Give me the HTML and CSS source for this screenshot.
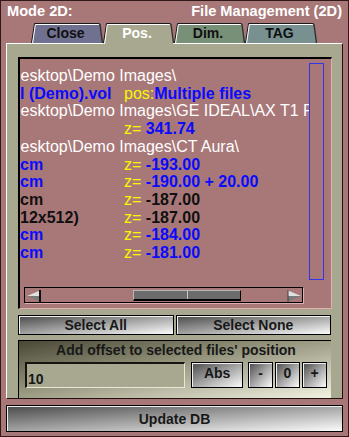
FILE: index.html
```html
<html>
    <head>
        <title>Mode 2D - File Management</title>
        <link rel="stylesheet" href="styles.css">
    </head>
    <body>
        <div class="win">
            <div class="head">
                <span>Mode 2D:</span>
                <span>File Management (2D)</span>
            </div>

            <div class="tabs">
                <div class="tab tab-close">
                    <svg width="72" height="20" viewBox="0 0 72 20">
                        <polygon points="0.5,20 3.5,1 4.5,0 68,0 69,1 71.5,20" fill="#707090"/>
                        <polyline points="0.5,20 3.5,0.5 68,0.5" fill="none" stroke="#181818"/>
                        <polyline points="1.6,20 4.4,1.5 68,1.5" fill="none" stroke="#ffffff"/>
                        <polyline points="68,0.5 69,1.5 71.5,20" fill="none" stroke="#303030" stroke-width="1.4"/>
                    </svg>
                    <span>Close</span>
                </div>
                <div class="tab tab-pos">
                    <svg width="71" height="21" viewBox="0 0 71 21">
                        <polygon points="0.5,21 3.5,1 4.5,0 67,0 68,1 70.5,21" fill="#a8a890"/>
                        <polyline points="0.5,20 3.5,0.5 67,0.5" fill="none" stroke="#181818"/>
                        <polyline points="1.6,21 4.4,1.5 67,1.5" fill="none" stroke="#ffffff"/>
                        <polyline points="67,0.5 68,1.5 70.5,20" fill="none" stroke="#303030" stroke-width="1.4"/>
                    </svg>
                    <span>Pos.</span>
                </div>
                <div class="tab tab-dim">
                    <svg width="71" height="20" viewBox="0 0 71 20">
                        <polygon points="0.5,20 3.5,1 4.5,0 67,0 68,1 70.5,20" fill="#789078"/>
                        <polyline points="0.5,20 3.5,0.5 67,0.5" fill="none" stroke="#181818"/>
                        <polyline points="1.6,20 4.4,1.5 67,1.5" fill="none" stroke="#ffffff"/>
                        <polyline points="67,0.5 68,1.5 70.5,20" fill="none" stroke="#303030" stroke-width="1.4"/>
                    </svg>
                    <span>Dim.</span>
                </div>
                <div class="tab tab-tag">
                    <svg width="72" height="20" viewBox="0 0 72 20">
                        <polygon points="0.5,20 3.5,1 4.5,0 68,0 69,1 71.5,20" fill="#789090"/>
                        <polyline points="0.5,20 3.5,0.5 68,0.5" fill="none" stroke="#181818"/>
                        <polyline points="1.6,20 4.4,1.5 68,1.5" fill="none" stroke="#ffffff"/>
                        <polyline points="68,0.5 69,1.5 71.5,20" fill="none" stroke="#303030" stroke-width="1.4"/>
                    </svg>
                    <span>TAG</span>
                </div>
            </div>

            <div class="panel">
                <div class="list">
                    <div class="list-top">
                        <div class="rows">
                            <div class="row path">Desktop\Demo Images\</div>
                            <div class="row"><span class="c1 blue">l (Demo).vol</span><span class="yel">pos:</span><b class="blue">Multiple files</b></div>
                            <div class="row path">Desktop\Demo Images\GE IDEAL\AX T1 FLAIR\</div>
                            <div class="row"><span class="c1"></span><span class="yel">z= </span><b class="blue">341.74</b></div>
                            <div class="row path">Desktop\Demo Images\CT Aura\</div>
                            <div class="row"><span class="c1 blue">cm</span><span class="yel">z= </span><b class="blue">-193.00</b></div>
                            <div class="row"><span class="c1 blue">cm</span><span class="yel">z= </span><b class="blue">-190.00 + 20.00</b></div>
                            <div class="row"><span class="c1 dark">cm</span><span class="yel">z= </span><b class="dark">-187.00</b></div>
                            <div class="row"><span class="c1 dark">12x512)</span><span class="yel">z= </span><b class="dark">-187.00</b></div>
                            <div class="row"><span class="c1 blue">cm</span><span class="yel">z= </span><b class="blue">-184.00</b></div>
                            <div class="row"><span class="c1 blue">cm</span><span class="yel">z= </span><b class="blue">-181.00</b></div>
                        </div>
                        <div class="vbar"></div>
                    </div>
                    <div class="hbar">
                        <svg class="arrow" width="14" height="12" viewBox="0 0 14 12">
                            <polygon points="0,6 13,0.5 13,6" fill="#e0e0e0"/>
                            <polygon points="0,6 13,6 13,11.5" fill="#7a7a7a"/>
                            <line x1="13" y1="0" x2="13" y2="12" stroke="#101010" stroke-width="2"/>
                        </svg>
                        <div class="track">
                            <div class="thumb"><i></i><i></i></div>
                        </div>
                        <svg class="arrow" width="14" height="12" viewBox="0 0 14 12">
                            <polygon points="1,0.5 14,6 1,6" fill="#e0e0e0"/>
                            <polygon points="1,6 14,6 1,11.5" fill="#7a7a7a"/>
                            <line x1="1" y1="0" x2="1" y2="12" stroke="#404040" stroke-width="1"/>
                        </svg>
                    </div>
                </div>

                <div class="sel-row">
                    <button class="btn">Select All</button>
                    <button class="btn">Select None</button>
                </div>

                <div class="offset">
                    <div class="offset-title">Add offset to selected files' position</div>
                    <div class="offset-row">
                        <div class="field">10</div>
                        <button class="btn abs">Abs</button>
                        <div class="spin">
                            <button class="btn">-</button>
                            <button class="btn">0</button>
                            <button class="btn">+</button>
                        </div>
                    </div>
                </div>
            </div>

            <button class="btn update">Update DB</button>
        </div>
    </body>
</html>
```

FILE: styles.css
```css
body{
    margin: 0;
    font-family: "Liberation Sans", Arial, Helvetica, sans-serif;
}

.win{
    width: 349px;
    height: 437px;
    box-sizing: border-box;
    background-color: #a87878;
    border: 1px solid #301818;
    display: flex;
    flex-direction: column;
}

.head{
    height: 22px;
    box-sizing: border-box;
    padding: 2px 6px 0 6px;
    display: flex;
    justify-content: space-between;
    color: #fff;
    font-weight: bold;
    font-size: 14.6px;
    line-height: 16px;
}

.tabs{
    height: 20px;
    padding-left: 30px;
    display: flex;
    position: relative;
    z-index: 2;
}
.tab{
    position: relative;
    height: 20px;
    font-weight: bold;
    font-size: 14px;
    line-height: 20px;
    color: #101010;
    text-align: center;
    padding-right: 3px;
    box-sizing: border-box;
}
.tab svg{
    position: absolute;
    left: 0;
    top: 0;
}
.tab span{
    position: relative;
}
.tab-close{ width: 72px; }
.tab-pos{ width: 71px; height: 21px; color: #fff; }
.tab-dim{ width: 71px; }
.tab-tag{ width: 72px; }

.panel{
    margin: 0 5px;
    height: 356px;
    box-sizing: border-box;
    background-color: #a8a890;
    border-top: 1px solid #fff;
    border-left: 1px solid #fff;
    border-right: 1px solid #201010;
    border-bottom: 1px solid #201010;
    padding: 13px 10px 0 11px;
}

.list{
    height: 252px;
    box-sizing: border-box;
    border-top: 2px solid #000;
    border-left: 2px solid #000;
    border-right: 1px solid #e0b0b0;
    border-bottom: 1px solid #e0b0b0;
    background-color: #a87878;
    display: flex;
    flex-direction: column;
}
.list-top{
    height: 228px;
    display: flex;
}
.rows{
    width: 289px;
    overflow: hidden;
    padding-top: 8px;
    box-sizing: border-box;
    font-size: 16px;
    line-height: 17.7px;
}
.row{
    white-space: nowrap;
}
.row.path{
    color: #fff;
    margin-left: -11px;
}
.c1{
    display: inline-block;
    width: 104px;
    font-weight: bold;
}
.blue{ color: #0a0aff; }
.dark{ color: #101010; }
.yel{ color: #f8f800; }

.vbar{
    width: 15px;
    height: 217px;
    margin-top: 4px;
    margin-right: 6px;
    box-sizing: border-box;
    border: 1px solid #3434f0;
}

.hbar{
    width: 279px;
    height: 16px;
    margin-left: 4px;
    box-sizing: border-box;
    border: 1px solid #000;
    box-shadow: 1px 1px 0 #e0b0b0;
    display: flex;
    align-items: flex-start;
    padding: 2px 1px 0 2px;
}
.arrow{
    flex: none;
}
.track{
    flex: 1;
    padding-left: 92px;
}
.thumb{
    width: 108px;
    height: 11px;
    box-sizing: border-box;
    display: flex;
    background-color: #6c6c6c;
    border-top: 1px solid #b8b8b8;
    border-left: 1px solid #b8b8b8;
    border-right: 1px solid #000;
    border-bottom: 2px solid #000;
}
.thumb i{
    flex: 1;
}
.thumb i + i{
    border-left: 1px solid #c8c8c8;
}

.btn{
    font-family: "Liberation Sans", Arial, Helvetica, sans-serif;
    font-weight: bold;
    font-size: 14px;
    color: #181818;
    border: 1px solid #000;
    box-shadow: inset 1px 1px 0 #f0f0f0;
    background: linear-gradient(to bottom right, #4a4a4a 0%, #9a9a9a 45%, #fbfbfb 100%);
    padding: 0;
    margin: 0;
}

.sel-row{
    margin-top: 6px;
    margin-right: 1px;
    height: 20px;
    display: grid;
    grid-template-columns: 1fr 1fr;
    grid-gap: 2px;
}

.offset{
    margin-top: 5px;
    margin-right: 1px;
    height: 58px;
    box-sizing: border-box;
    border-top: 1px solid #000;
    border-left: 1px solid #000;
    background: linear-gradient(to bottom right, #484836 0%, #8e8e76 40%, #f2f2e2 100%);
    padding: 1px 4px 0 6px;
}
.offset-title{
    font-weight: bold;
    font-size: 14px;
    line-height: 16px;
    color: #181818;
    text-align: center;
}
.offset-row{
    margin-top: 4px;
    height: 26px;
    display: flex;
}
.field{
    width: 161px;
    box-sizing: border-box;
    background-color: #a8a890;
    border-top: 2px solid #141410;
    border-left: 2px solid #141410;
    border-right: 1px solid #e8e8d8;
    border-bottom: 1px solid #e8e8d8;
    padding: 7px 0 0 1px;
    font-weight: bold;
    font-size: 14px;
    line-height: 16px;
    color: #181818;
}
.abs{
    width: 52px;
    margin-left: 6px;
    padding-bottom: 4px;
}
.spin{
    margin-left: 5px;
    display: flex;
    gap: 2px;
}
.spin .btn{
    width: 25px;
    padding-bottom: 4px;
}

.update{
    margin: 6px 5px 0 5px;
    height: 27px;
}
```
